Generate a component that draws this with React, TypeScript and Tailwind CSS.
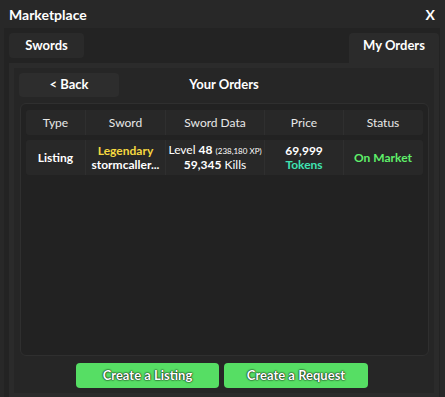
import React from "react";

const font = { fontFamily: "Lato, 'Noto Sans', sans-serif" };

export default function App() {
  const cols = "grid grid-cols-[60px_80px_99px_79px_78px]";
  return (
    <div style={font} className="w-[445px] h-[397px] bg-[#282828] flex flex-col text-white overflow-hidden">
      <div className="h-[28px] flex items-center justify-between pl-[9px] pr-[10px]">
        <span className="font-bold text-[14px]">Marketplace</span>
        <span className="font-bold text-[14px]">X</span>
      </div>
      <div className="flex-1 ml-[4px] mr-[5px] bg-[#232323] pl-[5px] pr-[1px] pt-[5px] flex flex-col">
        <div className="h-[30px] flex justify-between items-start">
          <div className="w-[75px] h-[25px] rounded-[4px] bg-[#2a2a2a] flex items-center justify-center font-bold text-[13px]">
            Swords
          </div>
          <div className="w-[90px] h-[30px] rounded-t-[4px] bg-[#2b2b2b] flex items-center justify-center font-bold text-[13px] pb-[5px]">
            My Orders
          </div>
        </div>
        <div className="flex-1 bg-[#2b2b2b] px-[5px] pt-[5px] pb-[4px] flex flex-col">
          <div className="flex-1 bg-[#262626] px-[5px] pt-[5px] pb-[5px] flex flex-col">
            <div className="grid grid-cols-[100px_1fr_100px] h-[24px] items-center">
              <div className="h-[24px] rounded-[4px] bg-[#2d2d2d] flex items-center justify-center font-bold text-[13px]">
                &lt; Back
              </div>
              <div className="text-center font-bold text-[13px]">Your Orders</div>
              <div />
            </div>
            <div className="mt-[6px] ml-[1px] h-[253px] rounded-[6px] border border-[#2f2f2f] bg-[#222222] px-[5px] pt-[6px] flex flex-col gap-[5px]">
              <div className={`${cols} h-[25px] rounded-[3px] bg-[#282828] text-[12px] text-[#e8e8e8]`}>
                <div className="flex items-center justify-center border-r border-[#2f2f2f]">Type</div>
                <div className="flex items-center justify-center border-r border-[#2f2f2f]">Sword</div>
                <div className="flex items-center justify-center border-r border-[#2f2f2f]">Sword Data</div>
                <div className="flex items-center justify-center border-r border-[#2f2f2f]">Price</div>
                <div className="flex items-center justify-center">Status</div>
              </div>
              <div className={`${cols} h-[35px] rounded-[3px] bg-[#282828] text-[12px]`}>
                <div className="flex items-center justify-center border-r border-[#2f2f2f] font-bold">Listing</div>
                <div className="flex flex-col items-center justify-center border-r border-[#2f2f2f] leading-[14px]">
                  <span className="font-bold text-[#f6d840]">Legendary</span>
                  <span className="font-bold">stormcaller...</span>
                </div>
                <div className="flex flex-col items-center justify-center border-r border-[#2f2f2f] leading-[14px]">
                  <span>
                    Level <span className="font-bold">48</span>{" "}
                    <span className="text-[8px]">(238,180 XP)</span>
                  </span>
                  <span>
                    <span className="font-bold">59,345</span> Kills
                  </span>
                </div>
                <div className="flex flex-col items-center justify-center border-r border-[#2f2f2f] leading-[14px] font-bold">
                  <span>69,999</span>
                  <span className="text-[#3fe3b2]">Tokens</span>
                </div>
                <div className="flex items-center justify-center font-bold text-[#5fef6a]">On Market</div>
              </div>
            </div>
            <div className="mt-[7px] flex justify-center gap-[5px] pr-[4px]">
              <div className="w-[143px] h-[25px] rounded-[4px] bg-[#56de64] flex items-center justify-center font-bold text-[13px] [text-shadow:0_0_2px_#000,0_0_1px_#000]">
                Create a Listing
              </div>
              <div className="w-[144px] h-[25px] rounded-[4px] bg-[#56de64] flex items-center justify-center font-bold text-[13px] [text-shadow:0_0_2px_#000,0_0_1px_#000]">
                Create a Request
              </div>
            </div>
          </div>
        </div>
      </div>
    </div>
  );
}
